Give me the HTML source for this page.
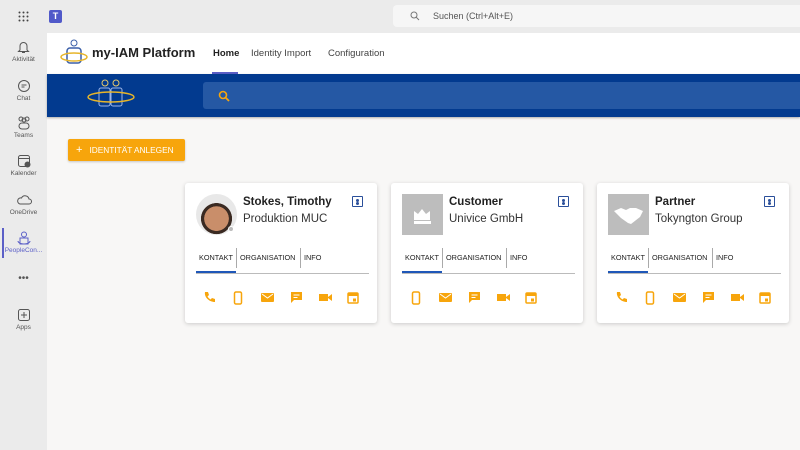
<!DOCTYPE html>
<html><head><meta charset="utf-8"><style>
*{box-sizing:border-box;margin:0;padding:0}
body{width:800px;height:450px;overflow:hidden;background:#f8f7f6;font-family:"Liberation Sans",sans-serif;position:relative}
.top{position:absolute;left:0;top:0;width:800px;height:33px;background:#ebebeb}
.rail{position:absolute;left:0;top:33px;width:47px;height:417px;background:#ebebeb}
.ri{position:absolute;left:0;width:47px;text-align:center;font-size:6.5px;color:#555}
.ri svg{display:block;margin:0 auto 2px}
.hdr{position:absolute;left:47px;top:33px;width:753px;height:41px;background:#fff}
.band{position:absolute;left:47px;top:74px;width:753px;height:43px;background:#023a8f;box-shadow:0 1px 2px rgba(0,0,0,.3)}
.srch{position:absolute;left:203px;top:82px;width:597px;height:27px;background:#2558a4;border-radius:3px 0 0 3px}
.btn{position:absolute;left:68px;top:139px;width:117px;height:22px;background:#f7a50c;color:#fff;font-size:8.3px;line-height:22px;padding-left:8px;border-radius:2px;box-shadow:0 1px 2px rgba(0,0,0,.2)}
.card{position:absolute;top:183px;width:192px;height:140px;background:#fff;border-radius:3px;box-shadow:0 1px 4px rgba(0,0,0,.18)}
.av{position:absolute;left:11px;top:11px;width:41px;height:41px;background:#bdbdbd}
.nm{position:absolute;left:58px;top:13px;font-size:11.5px;font-weight:bold;color:#222}
.sub{position:absolute;left:58px;top:30px;font-size:11.5px;color:#333}
.vc{position:absolute;right:14px;top:13px;width:11px;height:11px;border:1.5px solid #2a4f9a;border-radius:1px}
.vc:after{content:"";position:absolute;left:2.5px;top:1.5px;width:3px;height:3px;border-radius:50%;background:#2a4f9a;box-shadow:0 3px 0 0 #2a4f9a}
.tabs{position:absolute;left:11px;top:63px;width:173px;height:28px;border-bottom:1px solid #bbb;font-size:7.3px;color:#222}
.tabs span{position:absolute;top:6px;height:20px;line-height:12px}
.ic{position:absolute;top:108px;left:18px;width:160px;height:14px}
.ic svg{position:absolute;top:0}
</style></head><body>
<div class="top">
 <svg style="position:absolute;left:18px;top:11px" width="11" height="11"><g fill="#444"><circle cx="1.5" cy="1.5" r="1"/><circle cx="5.5" cy="1.5" r="1"/><circle cx="9.5" cy="1.5" r="1"/><circle cx="1.5" cy="5.5" r="1"/><circle cx="5.5" cy="5.5" r="1"/><circle cx="9.5" cy="5.5" r="1"/><circle cx="1.5" cy="9.5" r="1"/><circle cx="5.5" cy="9.5" r="1"/><circle cx="9.5" cy="9.5" r="1"/></g></svg>
 <div style="position:absolute;left:49px;top:10px;width:13px;height:13px;background:#5059c9;border-radius:2px;color:#fff;font-size:9px;font-weight:bold;text-align:center;line-height:13px">T</div>
 <div style="position:absolute;left:393px;top:5px;width:407px;height:22px;background:#f6f6f6;border-radius:4px 0 0 4px;font-size:9px;color:#555;line-height:22px;padding-left:40px">Suchen (Ctrl+Alt+E)
  <svg style="position:absolute;left:17px;top:6px" width="10" height="10"><circle cx="4" cy="4" r="3" fill="none" stroke="#777"/><path d="M6 6L9 9" stroke="#777"/></svg></div>
</div>
<div class="rail">
 <div style="position:absolute;left:2px;top:195px;width:2px;height:30px;background:#5b5fc7"></div>
 <div class="ri" style="top:7px"><svg width="13" height="14"><path d="M3 10V6a3.5 3.5 0 017 0v4l1.5 1.5h-10z M5 12.5h3" fill="none" stroke="#555"/></svg>Aktivität</div>
 <div class="ri" style="top:46px"><svg width="14" height="14"><circle cx="7" cy="7" r="5.5" fill="none" stroke="#555"/><path d="M4.5 6h5M4.5 8h3" stroke="#555"/></svg>Chat</div>
 <div class="ri" style="top:83px"><svg width="14" height="14"><circle cx="4" cy="3" r="2" fill="none" stroke="#555"/><circle cx="10" cy="3" r="2" fill="none" stroke="#555"/><circle cx="7" cy="4" r="2" fill="none" stroke="#555"/><rect x="2" y="7" width="10" height="6" rx="3" fill="none" stroke="#555"/></svg>Teams</div>
 <div class="ri" style="top:121px"><svg width="14" height="14"><rect x="1.5" y="1.5" width="11" height="11" rx="2" fill="none" stroke="#555"/><path d="M1.5 4.5h11" stroke="#555"/><circle cx="10.5" cy="10.5" r="3" fill="#555"/></svg>Kalender</div>
 <div class="ri" style="top:160px"><svg width="16" height="14"><path d="M4 11h9a2.5 2.5 0 000-5 4 4 0 00-7.5-1A3 3 0 004 11z" fill="none" stroke="#555"/></svg>OneDrive</div>
 <div class="ri" style="top:198px;color:#5b5fc7"><svg width="14" height="14"><circle cx="7" cy="3.5" r="2.5" fill="none" stroke="#5b5fc7"/><path d="M3 7h8v6H3z M1 10a6 3 0 0012 0" fill="none" stroke="#5b5fc7"/></svg>PeopleCon...</div>
 <div class="ri" style="top:240px;font-size:10px;color:#555">•••</div>
 <div class="ri" style="top:275px"><svg width="14" height="14"><rect x="1.5" y="1.5" width="11" height="11" rx="2" fill="none" stroke="#555"/><path d="M7 4v6M4 7h6" stroke="#555"/></svg>Apps</div>
</div>
<div class="hdr">
 <svg style="position:absolute;left:13px;top:5px" width="28" height="28"><circle cx="14" cy="5" r="3" fill="none" stroke="#3b5fa8"/><rect x="7" y="10" width="14" height="15" rx="3" fill="none" stroke="#3b5fa8" stroke-width="1.5"/><ellipse cx="14" cy="19" rx="13" ry="4" fill="none" stroke="#e7b52a" stroke-width="1.5"/></svg>
 <div style="position:absolute;left:45px;top:12px;font-size:13px;font-weight:bold;color:#222">my-IAM Platform</div>
 <div style="position:absolute;left:166px;top:15px;font-size:9.5px;color:#222;font-weight:bold">Home</div>
 <div style="position:absolute;left:165px;top:39px;width:26px;height:2px;background:#5b5fc7"></div>
 <div style="position:absolute;left:204px;top:15px;font-size:9.5px;color:#444">Identity Import</div>
 <div style="position:absolute;left:281px;top:15px;font-size:9.5px;color:#444">Configuration</div>
</div>
<div class="band">
 <svg style="position:absolute;left:40px;top:4px" width="50" height="34"><circle cx="18" cy="5" r="3" fill="none" stroke="#e7c86a"/><circle cx="29" cy="5" r="3" fill="none" stroke="#e7c86a"/><rect x="12" y="10" width="11" height="18" rx="2" fill="none" stroke="#9cb4e8"/><rect x="24" y="10" width="11" height="18" rx="2" fill="none" stroke="#9cb4e8"/><ellipse cx="24" cy="19" rx="23" ry="5" fill="none" stroke="#e7b52a" stroke-width="1.5"/></svg>
</div>
<div class="srch"><svg style="position:absolute;left:15px;top:8px" width="12" height="12"><circle cx="5" cy="5" r="3.5" fill="none" stroke="#f7a50c" stroke-width="1.6"/><path d="M7.5 7.5L11 11" stroke="#f7a50c" stroke-width="1.8"/></svg></div>
<div class="btn"><span style="font-size:11px;margin-right:7px">+</span>IDENTITÄT ANLEGEN</div>

<div class="card" style="left:185px">
 <div class="av" style="border-radius:50%;background:radial-gradient(circle at 50% 60%,#c98e6a 0 38%,#3a2a22 39% 48%,#e8e8e8 49%)"></div>
 <div style="position:absolute;left:43px;top:43px;width:6px;height:6px;border-radius:50%;background:#bbb;border:1px solid #fff"></div>
 <div class="nm">Stokes, Timothy</div><div class="sub">Produktion MUC</div><div class="vc"></div>
 <div class="tabs"><span style="left:3px">KONTAKT</span><div style="position:absolute;left:0;top:25px;width:40px;height:2px;background:#1f57b8"></div><div style="position:absolute;left:40px;top:2px;width:1px;height:20px;background:#aaa"></div><span style="left:44px">ORGANISATION</span><div style="position:absolute;left:104px;top:2px;width:1px;height:20px;background:#aaa"></div><span style="left:108px">INFO</span></div>
 <div class="ic">
  <svg style="left:0" width="12" height="12"><path d="M2 1l3 0 1 3-1.5 1.5a7 7 0 003 3L9 7l3 1v3c-6 0-11-5-10-10z" fill="#f7a50c"/></svg>
  <svg style="left:30px" width="10" height="14"><rect x="1.5" y="1" width="7" height="12" rx="1.5" fill="none" stroke="#f7a50c" stroke-width="1.5"/></svg>
  <svg style="left:58px" width="13" height="12"><rect x="0" y="2" width="13" height="9" rx="1" fill="#f7a50c"/><path d="M1 3l5.5 4L12 3" fill="none" stroke="#fff"/></svg>
  <svg style="left:87px" width="13" height="13"><path d="M1 1h11v8H4l-3 3z" fill="#f7a50c"/><path d="M3.5 4h6M3.5 6.5h4" stroke="#fff"/></svg>
  <svg style="left:116px" width="13" height="12"><rect x="0" y="3" width="9" height="7" fill="#f7a50c"/><path d="M9 6l4-3v7l-4-3z" fill="#f7a50c"/></svg>
  <svg style="left:144px" width="12" height="13"><rect x="1" y="2" width="10" height="10" rx="1" fill="none" stroke="#f7a50c" stroke-width="1.5"/><rect x="1" y="2" width="10" height="3" fill="#f7a50c"/><rect x="6" y="7.5" width="3" height="3" fill="#f7a50c"/></svg>
 </div>
</div>

<div class="card" style="left:391px">
 <div class="av"><svg width="41" height="41"><path d="M12 17l4 3 4-5 4 5 4-3v9H12z" fill="#fff"/><rect x="12" y="27" width="17" height="3" fill="#fff"/></svg></div>
 <div class="nm">Customer</div><div class="sub">Univice GmbH</div><div class="vc"></div>
 <div class="tabs"><span style="left:3px">KONTAKT</span><div style="position:absolute;left:0;top:25px;width:40px;height:2px;background:#1f57b8"></div><div style="position:absolute;left:40px;top:2px;width:1px;height:20px;background:#aaa"></div><span style="left:44px">ORGANISATION</span><div style="position:absolute;left:104px;top:2px;width:1px;height:20px;background:#aaa"></div><span style="left:108px">INFO</span></div>
 <div class="ic">
  <svg style="left:2px" width="10" height="14"><rect x="1.5" y="1" width="7" height="12" rx="1.5" fill="none" stroke="#f7a50c" stroke-width="1.5"/></svg>
  <svg style="left:30px" width="13" height="12"><rect x="0" y="2" width="13" height="9" rx="1" fill="#f7a50c"/><path d="M1 3l5.5 4L12 3" fill="none" stroke="#fff"/></svg>
  <svg style="left:59px" width="13" height="13"><path d="M1 1h11v8H4l-3 3z" fill="#f7a50c"/><path d="M3.5 4h6M3.5 6.5h4" stroke="#fff"/></svg>
  <svg style="left:88px" width="13" height="12"><rect x="0" y="3" width="9" height="7" fill="#f7a50c"/><path d="M9 6l4-3v7l-4-3z" fill="#f7a50c"/></svg>
  <svg style="left:116px" width="12" height="13"><rect x="1" y="2" width="10" height="10" rx="1" fill="none" stroke="#f7a50c" stroke-width="1.5"/><rect x="1" y="2" width="10" height="3" fill="#f7a50c"/><rect x="6" y="7.5" width="3" height="3" fill="#f7a50c"/></svg>
 </div>
</div>

<div class="card" style="left:597px">
 <div class="av"><svg width="41" height="41"><path d="M6 17l7-3 5 2 4-2 6 0 7 3-3 6-9 7-3-1-7-5z" fill="#fff"/></svg></div>
 <div class="nm">Partner</div><div class="sub">Tokyngton Group</div><div class="vc"></div>
 <div class="tabs"><span style="left:3px">KONTAKT</span><div style="position:absolute;left:0;top:25px;width:40px;height:2px;background:#1f57b8"></div><div style="position:absolute;left:40px;top:2px;width:1px;height:20px;background:#aaa"></div><span style="left:44px">ORGANISATION</span><div style="position:absolute;left:104px;top:2px;width:1px;height:20px;background:#aaa"></div><span style="left:108px">INFO</span></div>
 <div class="ic">
  <svg style="left:0" width="12" height="12"><path d="M2 1l3 0 1 3-1.5 1.5a7 7 0 003 3L9 7l3 1v3c-6 0-11-5-10-10z" fill="#f7a50c"/></svg>
  <svg style="left:30px" width="10" height="14"><rect x="1.5" y="1" width="7" height="12" rx="1.5" fill="none" stroke="#f7a50c" stroke-width="1.5"/></svg>
  <svg style="left:58px" width="13" height="12"><rect x="0" y="2" width="13" height="9" rx="1" fill="#f7a50c"/><path d="M1 3l5.5 4L12 3" fill="none" stroke="#fff"/></svg>
  <svg style="left:87px" width="13" height="13"><path d="M1 1h11v8H4l-3 3z" fill="#f7a50c"/><path d="M3.5 4h6M3.5 6.5h4" stroke="#fff"/></svg>
  <svg style="left:116px" width="13" height="12"><rect x="0" y="3" width="9" height="7" fill="#f7a50c"/><path d="M9 6l4-3v7l-4-3z" fill="#f7a50c"/></svg>
  <svg style="left:144px" width="12" height="13"><rect x="1" y="2" width="10" height="10" rx="1" fill="none" stroke="#f7a50c" stroke-width="1.5"/><rect x="1" y="2" width="10" height="3" fill="#f7a50c"/><rect x="6" y="7.5" width="3" height="3" fill="#f7a50c"/></svg>
 </div>
</div>
</body></html>
